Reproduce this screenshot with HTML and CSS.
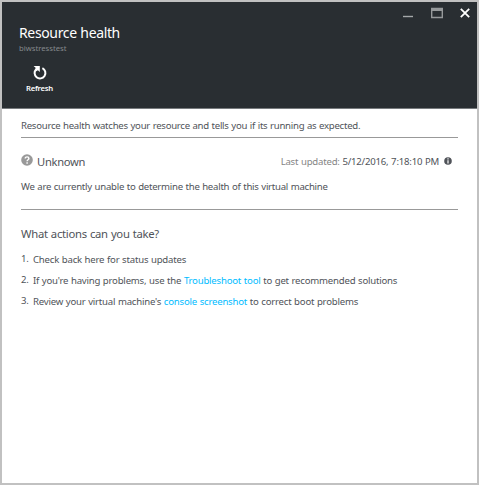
FILE: index.html
```
<!DOCTYPE html>
<html lang="en">
<head>
<meta charset="utf-8">
<title>Resource health</title>
<link rel="stylesheet" href="styles.css">
</head>
<body>
<main class="blade">
  <header class="header">
    <div class="controls">
      <svg width="10" height="12" viewBox="0 0 10 12"><path d="M0 9.5h10" stroke="#a5a8aa" stroke-width="1.4"/></svg>
      <svg width="12" height="12" viewBox="0 0 12 12"><path d="M.7 1.5h10.6v9H.7z" fill="none" stroke="#96999b" stroke-width="1.4"/><path d="M0 1h12v3H0z" fill="#96999b"/></svg>
      <svg width="10" height="12" viewBox="0 0 10 12"><path d="M.8 1.8l8.4 8.4M9.2 1.8L.8 10.2" stroke="#fff" stroke-width="1.8"/></svg>
    </div>
    <h1 class="title">Resource health</h1>
    <div class="subtitle">biwstresstest</div>
    <div class="command">
      <svg width="14" height="14" viewBox="0 0 14 14"><path d="M9.4 2.2A5.4 5.4 0 1 1 3.2 3.2" fill="none" stroke="#fff" stroke-width="2"/><path d="M.6 0h6.2v6L4.9 4.3 3.2 5.2 1.8 3.8 2.8 2z" fill="#fff"/></svg>
      <span class="command-label">Refresh</span>
    </div>
  </header>
  <section class="content">
    <p class="intro">Resource health watches your resource and tells you if its running as expected.</p>
    <div class="status">
      <div class="status-row">
        <svg class="question" width="12" height="12" viewBox="0 0 12 12"><circle cx="6" cy="6" r="5.8" fill="#999"/><path d="M4.2 4.6C4.2 2.3 7.9 2.4 7.9 4.5C7.9 5.9 6.1 5.7 6.1 7.2M6.1 8.2v1.5" fill="none" stroke="#fff" stroke-width="1.4"/></svg>
        <span class="state">Unknown</span>
        <span class="updated"><span class="muted">Last updated:</span> 5/12/2016, 7:18:10 PM</span>
        <svg class="info" width="8" height="8" viewBox="0 0 8 8"><circle cx="4" cy="4" r="3.8" fill="#505359"/><path d="M4 1.3v1.3M4 3.3v3.2" stroke="#fff" stroke-width="1.2"/></svg>
      </div>
      <p class="detail">We are currently unable to determine the health of this virtual machine</p>
    </div>
    <h2 class="question-title">What actions can you take?</h2>
    <ol class="actions">
      <li><span class="num">1.</span><span>Check back here for status updates</span></li>
      <li><span class="num">2.</span><span>If you're having problems, use the <a>Troubleshoot tool</a> to get recommended solutions</span></li>
      <li><span class="num">3.</span><span>Review your virtual machine's <a>console screenshot</a> to correct boot problems</span></li>
    </ol>
  </section>
</main>
</body>
</html>
```
FILE: styles.css
```
* { box-sizing: border-box; }
body { margin: 0; font-family: "Noto Sans", "Open Sans", sans-serif; font-size: 9.6px; line-height: 14px; word-spacing: .4px; color: #505359; }
h1, h2, p, ol { margin: 0; padding: 0; font-weight: 400; }
svg { display: block; flex: none; }
.blade { width: 479px; height: 485px; border: 2px solid #c1c1c1; background: #fff; white-space: nowrap; }
.header { height: 107px; background: #292e32; border-bottom: 1px solid #777b7e; color: #fff; padding: 5px 7px 0 17px; }
.controls { display: flex; justify-content: flex-end; gap: 18px; height: 12px; }
.controls svg:last-child { margin-left: -1px; }
.title { margin-top: 4px; font-size: 14px; line-height: 20px; letter-spacing: -.36px; }
.subtitle { font-size: 7.7px; line-height: 10px; color: #85898c; }
.command { width: 41px; margin-top: 13px; display: flex; flex-direction: column; align-items: center; }
.command-label { font-size: 7.7px; line-height: 10px; margin-top: 3px; font-weight: 600; letter-spacing: -.25px; }
.content { padding: 10px 19px 0; }
.intro { height: 19px; border-bottom: 1px solid #999; letter-spacing: -.26px; }
.status { height: 72px; border-bottom: 1px solid #999; padding-top: 15px; }
.status-row { display: flex; height: 16px; }
.question { margin-top: 1px; }
.state { margin-left: 4px; font-size: 11.2px; line-height: 18px; letter-spacing: -.3px; }
.updated { margin-left: auto; line-height: 18px; letter-spacing: -.21px; }
.muted { color: #858585; }
.info { margin: 4px 6px 0 5px; }
.detail { margin-top: 11px; letter-spacing: -.25px; }
.question-title { margin-top: 16px; font-size: 11.3px; line-height: 16px; letter-spacing: -.28px; }
.actions { list-style: none; margin-top: 11px; letter-spacing: -.21px; }
.actions li { display: flex; height: 21px; }
.num { width: 12px; line-height: 12px; }
a { color: #00bcff; }
```
